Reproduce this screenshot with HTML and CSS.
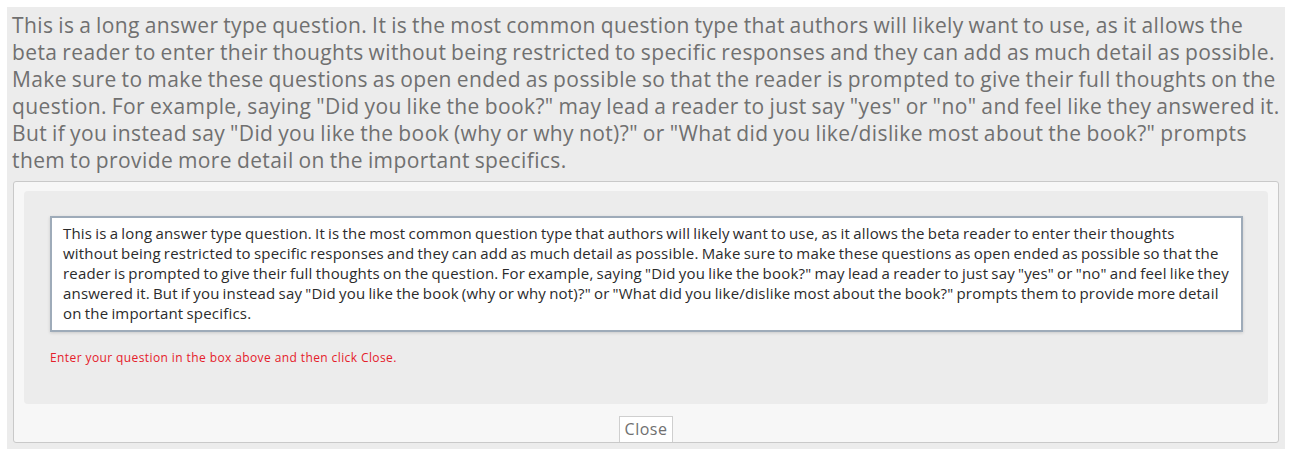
FILE: index.html
```html
<!DOCTYPE html>
<html>
<head>
<meta charset="utf-8">
<link rel="stylesheet" href="styles.css">
</head>
<body>
<div class="question">
  <p class="prompt">This is a long answer type question. It is the most common question type that authors will likely want to use, as it allows the beta reader to enter their thoughts without being restricted to specific responses and they can add as much detail as possible. Make sure to make these questions as open ended as possible so that the reader is prompted to give their full thoughts on the question. For example, saying "Did you like the book?" may lead a reader to just say "yes" or "no" and feel like they answered it. But if you instead say "Did you like the book (why or why not)?" or "What did you like/dislike most about the book?" prompts them to provide more detail on the important specifics.</p>
  <div class="panel">
    <div class="editor">
      <textarea class="answer" id="answer">This is a long answer type question. It is the most common question type that authors will likely want to use, as it allows the beta reader to enter their thoughts without being restricted to specific responses and they can add as much detail as possible. Make sure to make these questions as open ended as possible so that the reader is prompted to give their full thoughts on the question. For example, saying "Did you like the book?" may lead a reader to just say "yes" or "no" and feel like they answered it. But if you instead say "Did you like the book (why or why not)?" or "What did you like/dislike most about the book?" prompts them to provide more detail on the important specifics.</textarea>
      <p class="hint">Enter your question in the box above and then click Close.</p>
    </div>
    <div class="actions"><button class="close">Close</button></div>
  </div>
</div>
<script src="script.js"></script>
</body>
</html>
```
FILE: styles.css
```css
html, body { margin: 0; padding: 0; background: #ffffff; }
body { padding: 7px 5px 5px 7px; }
.question {
  width: 1278px;
  box-sizing: border-box;
  background: #ececec;
  padding: 5px 1px 6px 5px;
  font-family: "Open Sans", sans-serif;
}
.prompt {
  width: 1274px;
  margin: 0 0 7px 0;
  font-size: 21px;
  line-height: 27px;
  letter-spacing: 0.4px;
  word-spacing: -1px;
  color: #707070;
}
.panel {
  background: #f7f7f7;
  border: 1px solid #c9c9c9;
  border-radius: 3px;
  padding: 9px 10px 0 10px;
  margin: 0 5px 0 1px;
}
.editor {
  background: #ececec;
  border-radius: 4px;
  padding: 25px 25px 0 26px;
  height: 188px;
}
.answer {
  display: block;
  box-sizing: border-box;
  width: 1193px;
  height: 116px;
  margin: 0;
  padding: 5px 10px 5px 11px;
  border: 2px solid #9eabb9;
  background: #fff;
  font-family: "Open Sans", sans-serif;
  font-size: 15px;
  line-height: 20px;
  letter-spacing: 0.2px;
  word-spacing: -1px;
  color: #2b2b2b;
  resize: none;
  outline: none;
  overflow: hidden;
  box-shadow: 0 1px 3px rgba(0,0,0,0.15);
}
.hint {
  margin: 18px 0 0 0;
  font-size: 12px;
  line-height: 16px;
  letter-spacing: 0.4px;
  color: #e5202a;
}
.actions {
  display: flex;
  justify-content: center;
  padding-top: 12px;
}
.close {
  font-family: "Open Sans", sans-serif;
  font-size: 16px;
  line-height: 20px;
  letter-spacing: 0.5px;
  color: #707070;
  background: #fff;
  border: 1px solid #cfcfcf;
  border-bottom: none;
  padding: 2px 5px 3px 5px;
  margin: 0;
}
```
FILE: script.js
```js
var ta = document.getElementById('answer');
ta.focus();
ta.setSelectionRange(ta.value.length, ta.value.length);
```
